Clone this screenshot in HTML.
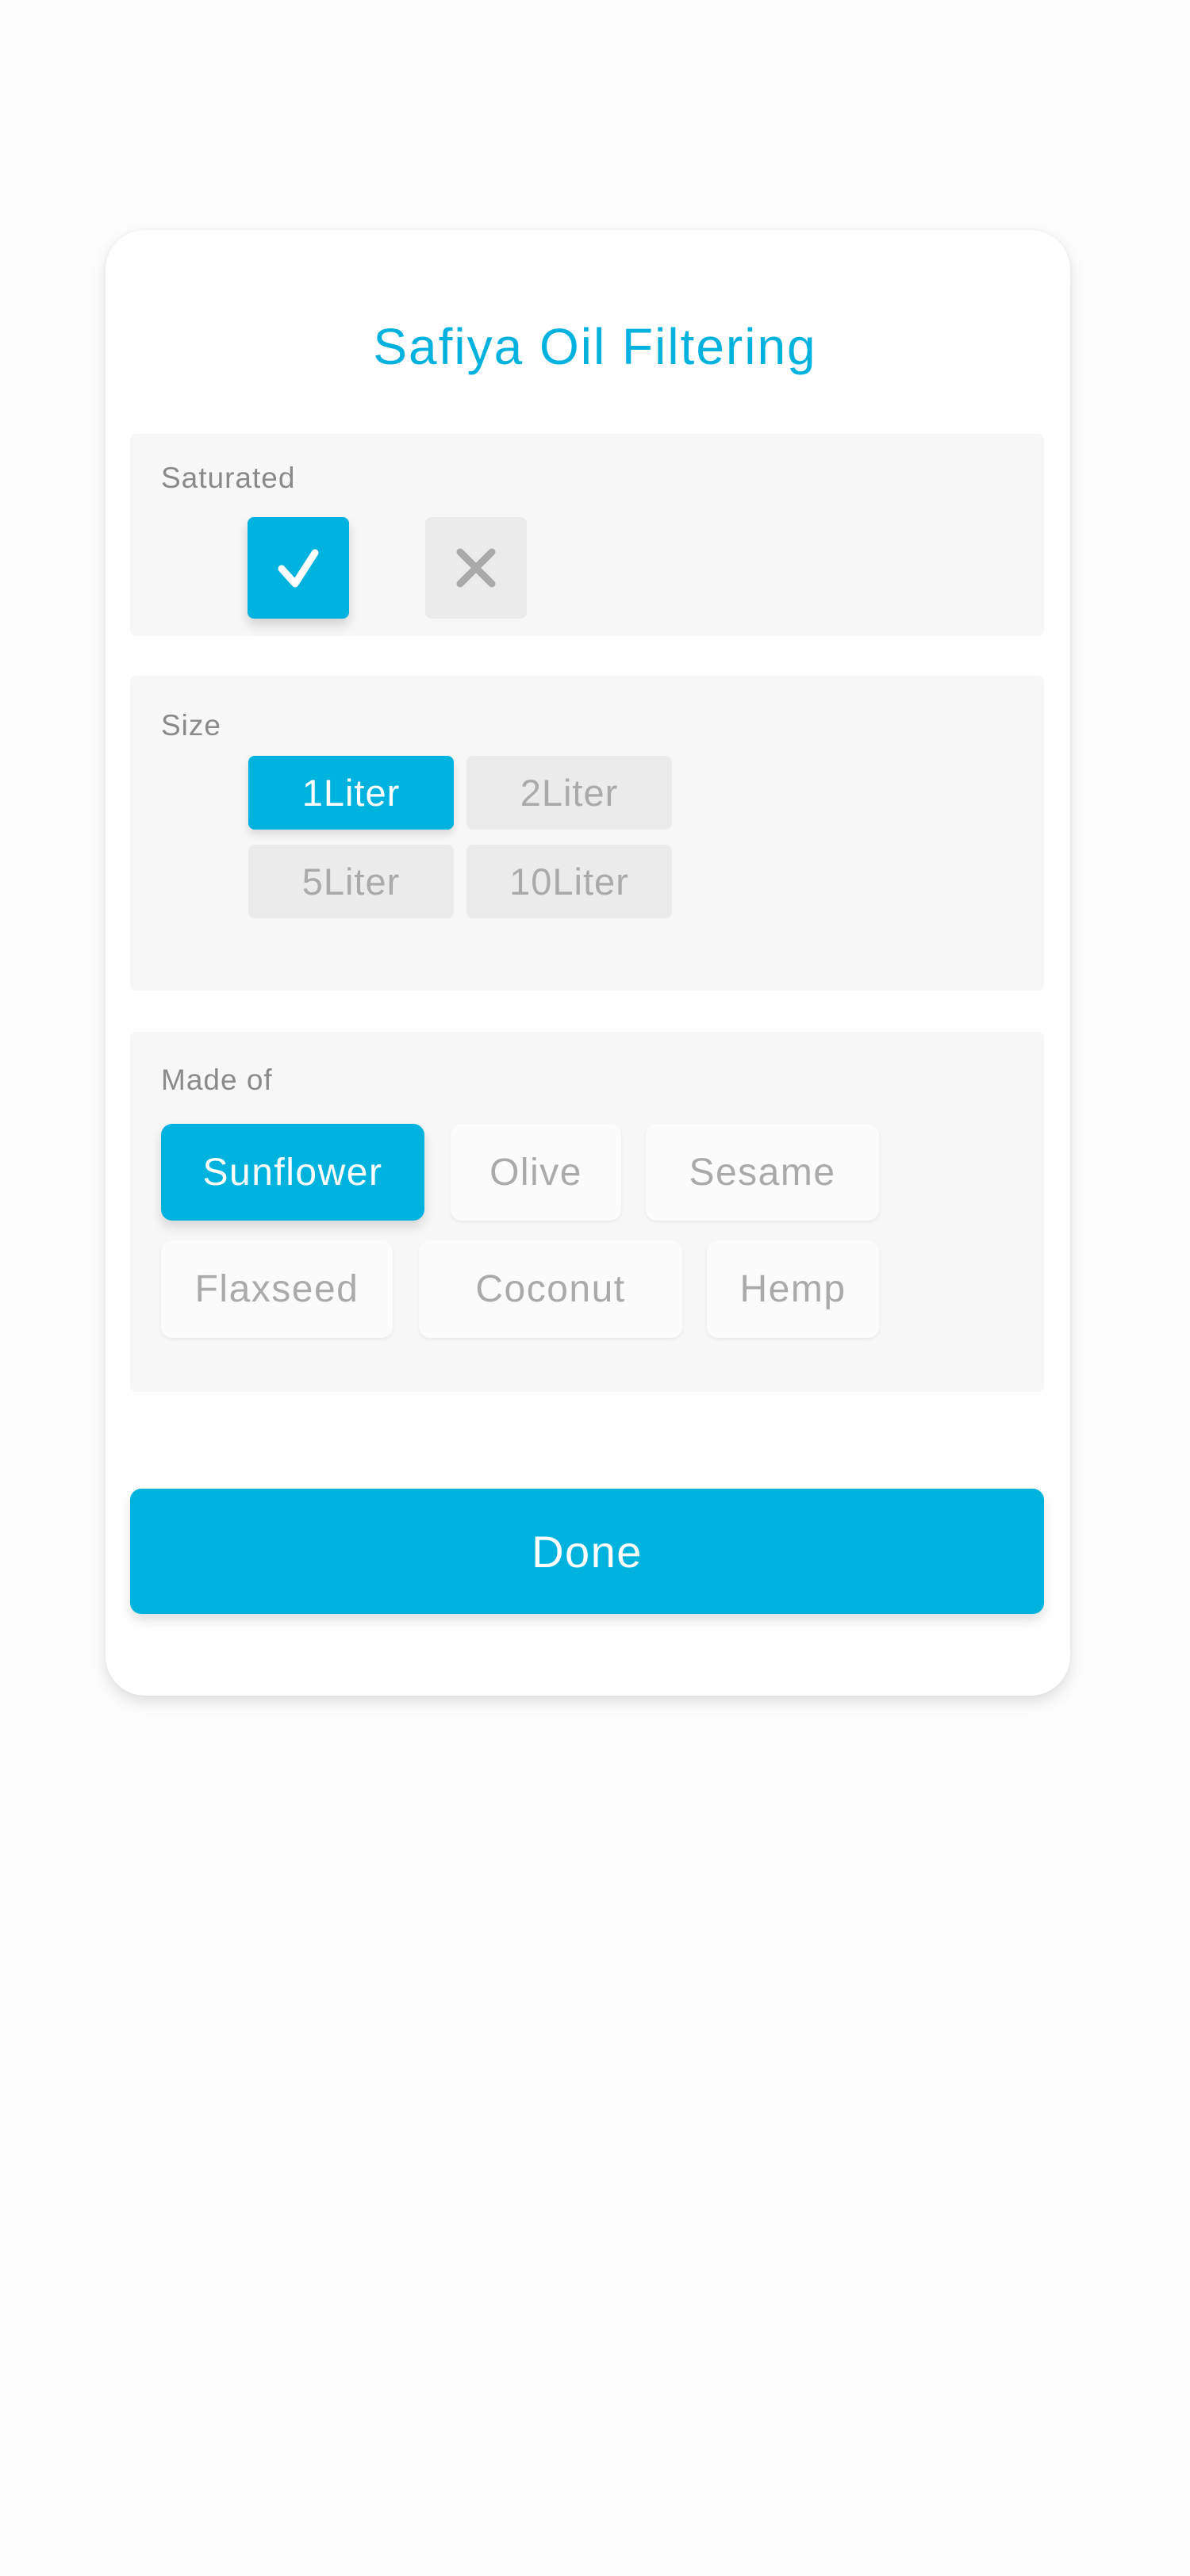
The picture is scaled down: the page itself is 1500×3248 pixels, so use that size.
<!DOCTYPE html>
<html><head><meta charset="utf-8"><style>
*{box-sizing:border-box;margin:0;padding:0}
body{width:1500px;height:3248px;background:#fdfdfd;font-family:"Liberation Sans",sans-serif;position:relative;overflow:hidden}
.card{position:absolute;left:133px;top:290px;width:1216px;height:1848px;background:#fff;border-radius:50px;box-shadow:0 8px 20px rgba(0,0,0,.12),0 0 6px rgba(0,0,0,.04)}
.abs{position:absolute}
.title{left:0;width:1500px;top:400px;text-align:center;color:#00b2dd;font-size:64px;line-height:74px;letter-spacing:2px}
.sec{background:#f7f7f7;border-radius:8px;left:164px;width:1152px}
.lbl{color:#8a8a8a;font-size:37px;left:203px;letter-spacing:1px}
.box{border-radius:8px;display:flex;align-items:center;justify-content:center}
.on{background:#00b3df;color:#fff}
.off{background:#ebebeb;color:#aaa}
.chip{background:#fbfbfb;color:#aaa;border-radius:14px;box-shadow:0 2px 5px rgba(0,0,0,.06);font-size:48px;letter-spacing:1.5px}
.lit{font-size:47px;letter-spacing:1px}
</style></head><body>
<div class="card"></div>
<div class="abs title">Safiya Oil Filtering</div>

<div class="abs sec" style="top:547px;height:255px"></div>
<div class="abs lbl" style="top:582px">Saturated</div>
<div class="abs box on" style="left:312px;top:652px;width:128px;height:128px;box-shadow:0 8px 14px rgba(0,0,0,.15)">
<svg width="128" height="128" style="position:absolute;left:0;top:0"><path d="M43 65 L60 84 L85 45" fill="none" stroke="#fff" stroke-width="9" stroke-linecap="round" stroke-linejoin="round"/></svg></div>
<div class="abs box off" style="left:536px;top:652px;width:128px;height:128px">
<svg width="128" height="128" style="position:absolute;left:0;top:0"><path d="M44 44 L84 84 M84 44 L44 84" fill="none" stroke="#aaa" stroke-width="9" stroke-linecap="round"/></svg></div>

<div class="abs sec" style="top:852px;height:397px"></div>
<div class="abs lbl" style="top:894px">Size</div>
<div class="abs box on lit" style="left:313px;top:953px;width:259px;height:93px;box-shadow:0 6px 10px rgba(0,0,0,.12)">1Liter</div>
<div class="abs box off lit" style="left:588px;top:953px;width:259px;height:93px">2Liter</div>
<div class="abs box off lit" style="left:313px;top:1065px;width:259px;height:93px">5Liter</div>
<div class="abs box off lit" style="left:588px;top:1065px;width:259px;height:93px">10Liter</div>

<div class="abs sec" style="top:1301px;height:454px"></div>
<div class="abs lbl" style="top:1341px">Made of</div>
<div class="abs box chip on" style="left:203px;top:1417px;width:332px;height:122px;background:#00b3df;color:#fff;box-shadow:0 8px 14px rgba(0,0,0,.13)">Sunflower</div>
<div class="abs box chip" style="left:568px;top:1417px;width:215px;height:122px">Olive</div>
<div class="abs box chip" style="left:814px;top:1417px;width:294px;height:122px">Sesame</div>
<div class="abs box chip" style="left:203px;top:1564px;width:292px;height:123px">Flaxseed</div>
<div class="abs box chip" style="left:528px;top:1564px;width:332px;height:123px">Coconut</div>
<div class="abs box chip" style="left:891px;top:1564px;width:217px;height:123px">Hemp</div>

<div class="abs box on" style="left:164px;top:1877px;width:1152px;height:158px;border-radius:14px;font-size:56px;letter-spacing:1.5px;box-shadow:0 8px 14px rgba(0,0,0,.12)">Done</div>
</body></html>
